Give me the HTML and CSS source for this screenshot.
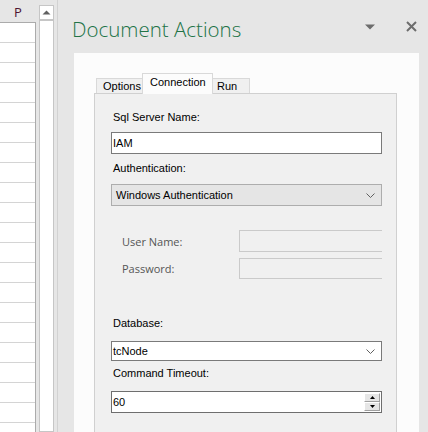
FILE: index.html
```html
<!DOCTYPE html>
<html>
<head>
<meta charset="utf-8">
<link rel="stylesheet" href="styles.css">
</head>
<body>
<div class="app">
  <div class="sheet">
    <div class="col-head">P</div>
    <div class="cells">
      <div class="row"></div><div class="row"></div><div class="row"></div><div class="row"></div>
      <div class="row"></div><div class="row"></div><div class="row"></div><div class="row"></div>
      <div class="row"></div><div class="row"></div><div class="row"></div><div class="row"></div>
      <div class="row"></div><div class="row"></div><div class="row"></div><div class="row"></div>
      <div class="row"></div><div class="row"></div><div class="row"></div><div class="row"></div>
      <div class="row"></div>
    </div>
  </div>
  <div class="vscroll">
    <div class="scroll-btn">
      <svg width="9" height="5" viewBox="0 0 9 5"><path d="M0.5 4.5 L4.5 0.5 L8.5 4.5 Z" fill="#606060"/></svg>
    </div>
    <div class="scroll-track"></div>
  </div>
  <div class="splitter"></div>
  <div class="pane">
    <div class="pane-head">
      <div class="pane-title">Document Actions</div>
      <svg class="pane-menu" width="10" height="6" viewBox="0 0 10 6"><path d="M0 0.5 H10 L5 5.5 Z" fill="#6d6d6d"/></svg>
      <svg class="pane-close" width="11" height="11" viewBox="0 0 11 11"><path d="M1 1 L10 10 M10 1 L1 10" stroke="#6d6d6d" stroke-width="2"/></svg>
    </div>
    <div class="pane-body">
      <div class="tabctl">
        <div class="tabs">
          <div class="tab">Options</div>
          <div class="tab active">Connection</div>
          <div class="tab">Run</div>
        </div>
        <div class="tabpage">
          <div class="lbl lbl-server">Sql Server Name:</div>
          <div class="textbox tb-server">IAM</div>
          <div class="lbl lbl-auth">Authentication:</div>
          <div class="combo combo-auth">
            <span>Windows Authentication</span>
            <svg width="9" height="5" viewBox="0 0 9 5"><path d="M0.5 0.5 L4.5 4.5 L8.5 0.5" fill="none" stroke="#606060" stroke-width="1"/></svg>
          </div>
          <div class="cred cred-user">
            <div class="cred-lbl">User Name:</div>
            <div class="cred-box"></div>
          </div>
          <div class="cred cred-pass">
            <div class="cred-lbl">Password:</div>
            <div class="cred-box"></div>
          </div>
          <div class="lbl lbl-db">Database:</div>
          <div class="combo combo-db">
            <span>tcNode</span>
            <svg width="9" height="5" viewBox="0 0 9 5"><path d="M0.5 0.5 L4.5 4.5 L8.5 0.5" fill="none" stroke="#606060" stroke-width="1"/></svg>
          </div>
          <div class="lbl lbl-timeout">Command Timeout:</div>
          <div class="numeric">
            <span class="num-val">60</span>
            <div class="spin">
              <div class="spin-btn"><svg width="5" height="3" viewBox="0 0 5 3"><path d="M0 3 L2.5 0 L5 3 Z" fill="#000"/></svg></div>
              <div class="spin-btn"><svg width="5" height="3" viewBox="0 0 5 3"><path d="M0 0 L2.5 3 L5 0 Z" fill="#000"/></svg></div>
            </div>
          </div>
        </div>
      </div>
    </div>
  </div>
</div>
</body>
</html>
```
FILE: styles.css
```css
* { box-sizing: border-box; }
html, body { margin: 0; padding: 0; }
body {
  width: 428px;
  height: 432px;
  overflow: hidden;
  background: #e6e6e6;
  font-family: "Liberation Sans", Arial, sans-serif;
}
.app {
  display: flex;
  width: 428px;
  height: 432px;
  background: #e6e6e6;
}
.sheet {
  width: 36px;
  flex: none;
  display: flex;
  flex-direction: column;
}
.col-head {
  height: 22px;
  text-align: center;
  font-family: "Open Sans", "Noto Sans", sans-serif;
  font-size: 13px;
  line-height: 24px;
  color: #4e1430;
}
.cells {
  flex: 1;
  background: #fff;
  border-top: 1px solid #ababab;
  border-right: 1px solid #ababab;
  overflow: hidden;
}
.row {
  height: 20px;
  border-bottom: 1px solid #d4d4d4;
}
.vscroll {
  width: 15px;
  flex: none;
  margin-left: 3px;
  margin-top: 5px;
  display: flex;
  flex-direction: column;
  border: 1px solid #c6c6c6;
  background: #fff;
}
.scroll-btn {
  height: 15px;
  border-bottom: 2px solid #c6c6c6;
  display: flex;
  align-items: center;
  justify-content: center;
}
.scroll-track { flex: 1; }
.splitter {
  width: 1px;
  flex: none;
  margin-left: 3px;
  background: #d2d2d2;
}
.pane {
  flex: 1;
  min-width: 0;
  display: flex;
  flex-direction: column;
  padding-left: 16px;
}
.pane-head {
  height: 53px;
  flex: none;
  display: flex;
  align-items: flex-start;
  margin-left: -2px;
}
.pane-title {
  flex: 1;
  margin-top: 15px;
  font-family: "Open Sans", "Noto Sans", sans-serif;
  font-weight: 300;
  font-size: 20.5px;
  line-height: 28px;
  color: #217346;
}
.pane-menu { margin-top: 24px; margin-right: 31px; }
.pane-close { margin-top: 21px; margin-right: 11px; }
.pane-body {
  flex: 1;
  min-width: 0;
  margin-right: 9px;
  background: #fcfcfc;
  padding: 20px 22px 0 20px;
}
.tabctl {
  height: 100%;
  display: flex;
  flex-direction: column;
}
.tabs {
  height: 21px;
  flex: none;
  display: flex;
  align-items: flex-end;
  padding-left: 2px;
  margin-bottom: -1px;
  position: relative;
  z-index: 1;
}
.tab {
  height: 15px;
  font-size: 11px;
  line-height: 14px;
  padding: 0 5px;
  border: 1px solid #d9d9d9;
  border-bottom: none;
  background: #f0f0f0;
  color: #000;
  margin-bottom: 1px;
}
.tab + .tab { margin-left: -1px; }
.tab:first-child { width: 47px; padding-left: 6px; }
.tab.active {
  height: 21px;
  width: 71px;
  background: #fcfcfc;
  line-height: 17px;
  padding-left: 7px;
  margin-bottom: 0;
  border-color: #d9d9d9;
  margin-left: -1px;
}
.tab:last-child { width: 38px; padding-left: 4px; }
.tabpage {
  flex: 1;
  min-width: 0;
  background: #f0f0f0;
  border: 1px solid #d0d0d0;
  border-bottom: none;
  padding: 0 14px 0 16px;
  display: flex;
  flex-direction: column;
  font-size: 11px;
  color: #000;
}
.lbl {
  height: 14px;
  line-height: 14px;
  padding-left: 2px;
}
.lbl-server { margin-top: 16px; }
.lbl-auth { margin-top: 7px; }
.lbl-db { margin-top: 37px; }
.lbl-timeout { margin-top: 5px; }
.textbox {
  height: 22px;
  margin-top: 8px;
  border: 1px solid #7a7a7a;
  background: #fff;
  line-height: 20px;
  padding-left: 1px;
}
.combo {
  display: flex;
  align-items: center;
  justify-content: space-between;
  padding: 0 6px 0 4px;
}
.combo-auth {
  height: 22px;
  margin-top: 9px;
  background: #e5e5e5;
  border: 1px solid #adadad;
}
.combo-db {
  height: 20px;
  margin-top: 11px;
  background: #fff;
  border: 1px solid #7a7a7a;
  padding-left: 1px;
}
.cred {
  height: 22px;
  display: flex;
  align-items: center;
  overflow: hidden;
  font-family: "Open Sans", "Noto Sans", sans-serif;
  font-size: 11px;
  color: #555;
}
.cred-user { margin-top: 24px; }
.cred-pass { margin-top: 6px; height: 21px; }
.cred-lbl {
  width: 128px;
  flex: none;
  padding-left: 11px;
}
.cred-box {
  flex: none;
  width: 170px;
  height: 100%;
  border: 1px solid #cacaca;
  background: #f0f0f0;
}
.numeric {
  height: 22px;
  margin-top: 11px;
  border: 1px solid #6e6e6e;
  background: #fff;
  display: flex;
  align-items: center;
  padding: 1px;
}
.num-val { flex: 1; line-height: 18px; }
.spin {
  width: 16px;
  height: 18px;
  display: flex;
  flex-direction: column;
}
.spin-btn {
  flex: 1;
  background: #e6e6e6;
  border: 1px solid #fff;
  border-right-color: #a0a0a0;
  border-bottom-color: #a0a0a0;
  display: flex;
  align-items: center;
  justify-content: center;
}
```
